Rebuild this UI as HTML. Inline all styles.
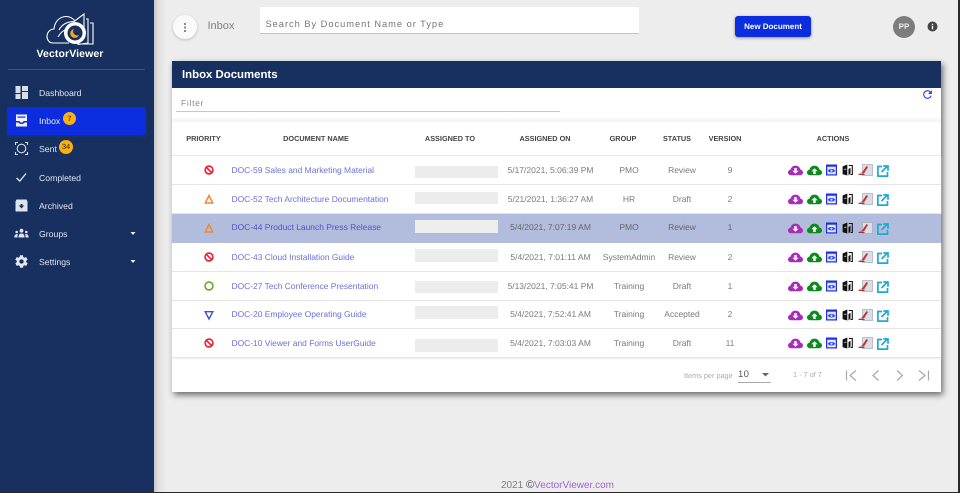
<!DOCTYPE html>
<html>
<head>
<meta charset="utf-8">
<style>
html,body{margin:0;padding:0;width:960px;height:493px;overflow:hidden;background:#ededed;font-family:"Liberation Sans",sans-serif;text-rendering:geometricPrecision;}
#w{position:absolute;left:0;top:0;width:960px;height:493px;overflow:hidden;filter:blur(.35px);background:#ededed;}
.a{position:absolute;white-space:nowrap;}
#side{position:absolute;left:0;top:0;width:153.5px;height:493px;background:#17305f;}
.nav{position:absolute;left:39px;font-size:8.7px;color:#dfe4ee;line-height:12px;}
.ic{position:absolute;left:14px;width:15px;height:15px;}
.badge{position:absolute;border-radius:50%;background:#fcb00a;color:#222;font-size:7.5px;text-align:center;}
.th{position:absolute;top:134px;font-size:7.3px;font-weight:bold;color:#444;line-height:9px;white-space:nowrap;transform:translateX(-50%);}
.row{position:absolute;left:172px;width:769px;height:28px;border-bottom:1px solid #e4e4e4;box-shadow:0 1px 1px #f0f0f0;background:#fff;}
.row.sel{background:#b2bcdc;border-bottom:0;box-shadow:none;height:29px;}
.c{position:absolute;top:8.5px;font-size:8.5px;line-height:11px;color:#7a7a7a;white-space:nowrap;transform:translateX(-50%);}
.n{position:absolute;left:59.5px;top:8.5px;font-size:8.45px;line-height:11px;color:#6a70dc;white-space:nowrap;}
.sel .n{color:#4d54c8;}
.sel .c{color:#666;}
.g{position:absolute;left:243px;width:83px;height:12.5px;background:#ececec;}
.sel .g{background:#eeeeee;}
.p{position:absolute;left:31px;top:8px;width:12px;height:12px;}
.acts{position:absolute;left:613px;top:4px;width:105px;height:20px;}
</style>
</head>
<body>
<svg width="0" height="0" style="position:absolute">
<defs>
<symbol id="no" viewBox="0 0 12 12"><circle cx="6" cy="6" r="3.900" fill="none" stroke="#ee1c2e" stroke-width="1.600"/><path d="M3.300 3.300 8.700 8.700" stroke="#ee1c2e" stroke-width="1.600"/></symbol>
<symbol id="tri" viewBox="0 0 12 12"><path d="M6 2.500 9.700 10H2.300Z" fill="none" stroke="#ee8a2c" stroke-width="1.500"/></symbol>
<symbol id="cir" viewBox="0 0 12 12"><circle cx="6" cy="6" r="4" fill="none" stroke="#62a51e" stroke-width="1.500"/></symbol>
<symbol id="dn" viewBox="0 0 12 12"><path d="M6 10 2.200 2.700H9.800Z" fill="none" stroke="#3b55c8" stroke-width="1.400"/></symbol>
<symbol id="acts" viewBox="0 0 105 20">
  <g transform="translate(3 5)"><path d="M3 10.200C1.200 10.200 0 9 0 7.500 0 6.100 1 5 2.400 4.800 3 2.300 5 .6 7.500.6 10 .6 12 2.300 12.600 4.800 14 5 15 6.100 15 7.500 15 9 13.800 10.200 12 10.200Z" fill="#a72cb8"/><path d="M6.300 3h2.400v2.700h1.900L7.500 8.800 4.400 5.700h1.900Z" fill="#fff"/></g>
  <g transform="translate(22 5)"><path d="M3 10.200C1.200 10.200 0 9 0 7.500 0 6.100 1 5 2.400 4.800 3 2.300 5 .6 7.500.6 10 .6 12 2.300 12.600 4.800 14 5 15 6.100 15 7.500 15 9 13.800 10.200 12 10.200Z" fill="#0d8a1e"/><path d="M6.300 9h2.400V6.300h1.900L7.500 3.200 4.400 6.300h1.900Z" fill="#fff"/></g>
  <g transform="translate(41 4.500)"><rect x=".6" y=".6" width="9.800" height="9.800" fill="#dfe6fb" stroke="#1c2fe0" stroke-width="1.200"/><rect x=".6" y=".6" width="9.800" height="1.600" fill="#1c2fe0"/><path d="M1.800 6.200C3.300 3.900 7.700 3.900 9.200 6.200 7.700 8.500 3.300 8.500 1.800 6.200Z" fill="#2b3fe4"/><circle cx="5.500" cy="6.200" r="1.100" fill="#dfe6fb"/></g>
  <g transform="translate(57 4)"><path d="M.6 2.500 5.300.5V11.500L.6 10.300Z" fill="#111"/><path d="M6.800 1.500H10.300V10.500H8.500" fill="none" stroke="#111" stroke-width="1.100"/><path d="M6.500 5 8.500 3.800V9.500L6.500 11.500Z" fill="#111"/><path d="M2.300 5.500 4.300 5" stroke="#eee" stroke-width=".8"/></g>
  <g transform="translate(73 4)"><rect x="4.500" y=".5" width="10" height="11" fill="#d9dfe9" stroke="#a4aab5" stroke-width=".7"/><path d="M.5 9.500 4 8.500 8.500 2 10 3 6 9.500Z" fill="#c8322e"/><path d="M.5 10.500h6" stroke="#8a2a2a" stroke-width=".9"/></g>
  <g transform="translate(92 5)"><path d="M5 1.500H.9V11.100H10.500V7" fill="none" stroke="#1fa9cf" stroke-width="1.700"/><path d="M4.500 7 10 1.500M6.300 1H11V5.700" fill="none" stroke="#1fa9cf" stroke-width="1.700"/></g>
</symbol>
</defs>
</svg>
<div id="w">

<div class="a" style="left:153px;top:0;width:13px;height:493px;background:linear-gradient(90deg,#bdbdbd,#dedede 35%,#ededed)"></div>
<div id="side">
  <svg class="a" style="left:44px;top:12px" width="52" height="35" viewBox="0 0 52 35" fill="none" stroke="#fff" stroke-width="1.100">
    <path d="M25 31H9C5 31 3 27.500 3 24.500 3 20.500 6 17 10 17 10.500 10 15.500 4.500 22 4.500 26 4.500 29 6.500 31 9"/>
    <path d="M15 18C18 12 24 9.500 30 9.500 L40 2 V26 L34 31"/>
    <path d="M42 7 44 7 V31 L34 32.500 M46 11 49 11 V32 H33"/>
    <path d="M14 25C18 18 24 16 29 16" />
    <circle cx="31" cy="21" r="11" fill="#fff" stroke="none"/>
    <circle cx="31" cy="21" r="7.500" fill="#17305f" stroke="none"/>
    <path d="M30 17A4.500 4.500 0 1 0 35 23 4 4 0 0 1 30 17Z" fill="#f2a81d" stroke="none"/>
  </svg>
  <div class="a" style="left:36.500px;top:47.500px;font-size:10.500px;line-height:13px;font-weight:bold;color:#fff;letter-spacing:.1px">VectorViewer</div>
  <div class="a" style="left:8px;top:69px;width:137px;height:1px;background:#3d5580"></div>

  <svg class="ic" style="top:85px" viewBox="0 0 15 15" fill="#d8dde8"><rect x="1.500" y="1" width="5" height="7"/><rect x="8" y="1" width="6" height="5"/><rect x="1.500" y="9" width="5" height="5"/><rect x="8" y="7" width="6" height="7"/></svg>
  <div class="nav" style="top:87px">Dashboard</div>

  <div class="a" style="left:7px;top:107px;width:138.500px;height:27.500px;background:#0c2ddf;border-radius:2px;box-shadow:0 2px 5px rgba(20,60,120,.5)"></div>
  <svg class="ic" style="top:113px" viewBox="0 0 15 15" fill="#eef0fb"><path d="M2 1.500H13V8H9.500C9.500 9 8.500 9.500 7.500 9.500S5.500 9 5.500 8H2Z"/><path d="M2 9.500H4.500C5 10.500 6 11 7.500 11S10 10.500 10.500 9.500H13V13.500H2Z"/><rect x="3.500" y="3.500" width="8" height="1.200" fill="#0c2ddf"/></svg>
  <div class="nav" style="top:115px;color:#e8ecfa">Inbox</div>
  <div class="badge" style="left:63px;top:112px;width:13px;height:13px;line-height:13px">7</div>

  <svg class="ic" style="top:141px" viewBox="0 0 15 15" fill="none" stroke="#d8dde8" stroke-width="1.100"><circle cx="7.500" cy="7.500" r="4.300"/><path d="M1.500 4V1.500H4M11 1.500H13.500V4M13.500 11V13.500H11M4 13.500H1.500V11"/></svg>
  <div class="nav" style="top:143px">Sent</div>
  <div class="badge" style="left:59px;top:140px;width:14px;height:14px;line-height:14px">34</div>

  <svg class="ic" style="top:170px" viewBox="0 0 15 15" fill="none" stroke="#e4e8f0" stroke-width="1.300"><path d="M2.500 8 5.800 11 12 3.500"/></svg>
  <div class="nav" style="top:171.500px">Completed</div>

  <svg class="ic" style="top:198px" viewBox="0 0 15 15"><path d="M2.500 1.500H12.500L13.500 3.500V13.500H1.500V3.500Z" fill="#dfe3ec"/><path d="M7.500 10.500 4.800 7.500H6.500V6H8.500V7.500H10.200Z" fill="#17305f"/></svg>
  <div class="nav" style="top:200px">Archived</div>

  <svg class="a" style="left:14px;top:228px" width="15" height="11" viewBox="0 0 15 11" fill="#dfe3ec"><circle cx="7.500" cy="2.700" r="1.900"/><circle cx="2.700" cy="4" r="1.300"/><circle cx="12.300" cy="4" r="1.300"/><path d="M4.500 9.500C4.500 6.800 5.500 5.500 7.500 5.500S10.500 6.800 10.500 9.500ZM.3 9.500C.3 7.300 1.200 6 3.800 6 3.500 7 3.500 8.500 3.500 9.500ZM14.700 9.500C14.700 7.300 13.800 6 11.200 6 11.500 7 11.500 8.500 11.500 9.500Z"/></svg>
  <div class="nav" style="top:228px">Groups</div>
  <svg class="a" style="left:130px;top:232px" width="6" height="4"><path d="M.5 0H5.500L3 3Z" fill="#f0f2f6"/></svg>

  <svg class="ic" style="top:254px" viewBox="0 0 24 24" fill="#e4e8f0"><path d="M19.400 13c.04-.3.1-.7.1-1s-.03-.7-.1-1l2.100-1.600c.2-.2.2-.4.100-.6l-2-3.500c-.1-.2-.4-.3-.6-.2l-2.500 1c-.5-.4-1.100-.7-1.700-1l-.4-2.600c0-.3-.2-.4-.5-.4h-4c-.2 0-.5.2-.5.4l-.4 2.600c-.6.3-1.200.6-1.700 1l-2.500-1c-.2-.1-.5 0-.6.200l-2 3.500c-.1.2-.1.500.1.600L4.500 11c0 .3-.1.700-.1 1s.03.700.1 1l-2.100 1.600c-.2.200-.2.400-.1.600l2 3.500c.1.200.4.300.6.200l2.500-1c.5.400 1.100.700 1.700 1l.4 2.600c0 .2.300.4.500.4h4c.3 0 .5-.2.500-.4l.4-2.600c.6-.3 1.200-.6 1.700-1l2.500 1c.2.100.5 0 .6-.2l2-3.500c.1-.2.100-.5-.1-.6ZM12 15.500a3.500 3.500 0 1 1 0-7 3.500 3.500 0 0 1 0 7Z"/></svg>
  <div class="nav" style="top:256px">Settings</div>
  <svg class="a" style="left:130px;top:260px" width="6" height="4"><path d="M.5 0H5.500L3 3Z" fill="#f0f2f6"/></svg>
</div>

<!-- top bar -->
<div class="a" style="left:173px;top:15px;width:24px;height:24px;border-radius:50%;background:#fafafa;box-shadow:0 1px 3px rgba(0,0,0,.2)"></div>
<div class="a" style="left:184px;top:23px;width:2px;height:2px;background:#888;box-shadow:0 3.500px 0 #888,0 7px 0 #888"></div>
<div class="a" style="left:207.500px;top:19.500px;font-size:11px;line-height:13px;color:#808080">Inbox</div>
<div class="a" style="left:260px;top:7px;width:379px;height:26px;background:#fff;border-bottom:1px solid #c4c4c4"></div>
<div class="a" style="left:265.500px;top:17.500px;font-size:9.300px;line-height:12px;color:#777;letter-spacing:.97px">Search By Document Name or Type</div>
<div class="a" style="left:735px;top:16px;width:76px;height:21px;background:#0c2ddf;border-radius:3px;box-shadow:0 1px 3px rgba(0,0,0,.4);color:#fff;font-size:8px;font-weight:bold;text-align:center;line-height:21px">New Document</div>
<div class="a" style="left:893px;top:16px;width:22px;height:22px;border-radius:50%;background:#7d7d7d;color:#eee;font-size:8px;font-weight:bold;text-align:center;line-height:21px">PP</div>
<svg class="a" style="left:927px;top:21px" width="11" height="11" viewBox="0 0 11 11"><circle cx="5.500" cy="5.500" r="5" fill="#444"/><rect x="4.800" y="4.800" width="1.400" height="3.500" fill="#eee"/><rect x="4.800" y="2.700" width="1.400" height="1.400" fill="#eee"/></svg>

<!-- card -->
<div class="a" style="left:172px;top:61px;width:769px;height:331px;background:#fff;box-shadow:2px 3px 6px rgba(0,0,0,.55)"></div>
<div class="a" style="left:172px;top:61px;width:769px;height:27px;background:#17305f"></div>
<div class="a" style="left:182px;top:67.500px;font-size:11.400px;line-height:15px;font-weight:bold;color:#fff">Inbox Documents</div>
<div class="a" style="left:181px;top:98px;font-size:8.500px;line-height:11px;color:#888;letter-spacing:.7px">Filter</div>
<div class="a" style="left:176px;top:111px;width:384px;height:1px;background:#c6c6c6"></div>
<svg class="a" style="left:921px;top:88px" width="13" height="13" viewBox="0 0 24 24" fill="#2438e0"><path d="M17.650 6.350A8 8 0 0 0 12 4a8 8 0 1 0 7.750 10h-2.100A6 6 0 1 1 12 6c1.660 0 3.140.69 4.220 1.780L13 11h7V4Z"/></svg>
<div class="a" style="left:172px;top:118px;width:769px;height:4px;background:linear-gradient(#fafafa,#f3f3f3)"></div>

<div class="th" style="left:203.500px">PRIORITY</div>
<div class="th" style="left:316px">DOCUMENT NAME</div>
<div class="th" style="left:450px">ASSIGNED TO</div>
<div class="th" style="left:545px">ASSIGNED ON</div>
<div class="th" style="left:623px">GROUP</div>
<div class="th" style="left:677px">STATUS</div>
<div class="th" style="left:725px">VERSION</div>
<div class="th" style="left:833px">ACTIONS</div>
<div class="a" style="left:172px;top:155px;width:769px;height:1px;background:#e8e8e8"></div>

<div class="row" style="top:156px"><svg class="p"><use href="#no"/></svg><div class="n">DOC-59 Sales and Marketing Material</div><div class="g" style="top:9.500px"></div><div class="c" style="left:378.500px">5/17/2021, 5:06:39 PM</div><div class="c" style="left:457px">PMO</div><div class="c" style="left:510px">Review</div><div class="c" style="left:558px">9</div><svg class="acts"><use href="#acts"/></svg></div>

<div class="row" style="top:185px"><svg class="p"><use href="#tri"/></svg><div class="n">DOC-52 Tech Architecture Documentation</div><div class="g" style="top:6.500px"></div><div class="c" style="left:378.500px">5/21/2021, 1:36:27 AM</div><div class="c" style="left:457px">HR</div><div class="c" style="left:510px">Draft</div><div class="c" style="left:558px">2</div><svg class="acts"><use href="#acts"/></svg></div>

<div class="row sel" style="top:213.500px"><svg class="p"><use href="#tri"/></svg><div class="n">DOC-44 Product Launch Press Release</div><div class="g" style="top:6.500px"></div><div class="c" style="left:378.500px">5/4/2021, 7:07:19 AM</div><div class="c" style="left:457px">PMO</div><div class="c" style="left:510px">Review</div><div class="c" style="left:558px">1</div><svg class="acts"><use href="#acts"/></svg></div>

<div class="row" style="top:243px"><svg class="p"><use href="#no"/></svg><div class="n">DOC-43 Cloud Installation Guide</div><div class="g" style="top:6px"></div><div class="c" style="left:378.500px">5/4/2021, 7:01:11 AM</div><div class="c" style="left:457px">SystemAdmin</div><div class="c" style="left:510px">Review</div><div class="c" style="left:558px">2</div><svg class="acts"><use href="#acts"/></svg></div>

<div class="row" style="top:272px"><svg class="p"><use href="#cir"/></svg><div class="n">DOC-27 Tech Conference Presentation</div><div class="g" style="top:8.500px"></div><div class="c" style="left:378.500px">5/13/2021, 7:05:41 PM</div><div class="c" style="left:457px">Training</div><div class="c" style="left:510px">Draft</div><div class="c" style="left:558px">1</div><svg class="acts"><use href="#acts"/></svg></div>

<div class="row" style="top:300.500px;height:27.500px"><svg class="p"><use href="#dn"/></svg><div class="n">DOC-20 Employee Operating Guide</div><div class="g" style="top:5.500px"></div><div class="c" style="left:378.500px">5/4/2021, 7:52:41 AM</div><div class="c" style="left:457px">Training</div><div class="c" style="left:510px">Accepted</div><div class="c" style="left:558px">2</div><svg class="acts"><use href="#acts"/></svg></div>

<div class="row" style="top:329px"><svg class="p"><use href="#no"/></svg><div class="n">DOC-10 Viewer and Forms UserGuide</div><div class="g" style="top:10px"></div><div class="c" style="left:378.500px">5/4/2021, 7:03:03 AM</div><div class="c" style="left:457px">Training</div><div class="c" style="left:510px">Draft</div><div class="c" style="left:558px">11</div><svg class="acts"><use href="#acts"/></svg></div>

<!-- paginator -->
<div class="a" style="left:684px;top:371px;font-size:7.300px;line-height:9px;color:#aaa">Items per page</div>
<div class="a" style="left:738px;top:369px;font-size:9.500px;line-height:12px;color:#555;letter-spacing:.4px">10</div>
<div class="a" style="left:737.500px;top:382px;width:33px;height:1px;background:#aaa"></div>
<svg class="a" style="left:762px;top:373px" width="7" height="4"><path d="M0 0H7L3.500 3.500Z" fill="#666"/></svg>
<div class="a" style="left:793px;top:370px;font-size:7.300px;line-height:9px;color:#aaa">1 - 7 of 7</div>
<svg class="a" style="left:845px;top:369px" width="90" height="13" viewBox="0 0 90 13" fill="none" stroke="#a8a8a8" stroke-width="1.200">
  <path d="M1.500 1.500V11.500M11 1.500 5 6.500 11 11.500"/>
  <path d="M33.500 1.500 28 6.500 33.500 11.500"/>
  <path d="M52 1.500 57.500 6.500 52 11.500"/>
  <path d="M74 1.500 80 6.500 74 11.500M83.500 1.500V11.500"/>
</svg>

<!-- footer -->
<div class="a" style="left:501px;top:479px;font-size:10px;line-height:13px;color:#7d7d7d">2021 <span style="color:#444;font-size:11px">©</span><span style="color:#a660c8">VectorViewer.com</span></div>
<div class="a" style="left:958px;top:0;width:2px;height:493px;background:#26282c"></div>
<div class="a" style="left:0;top:491.500px;width:960px;height:2px;background:#26282c"></div>
</div>
</body>
</html>
